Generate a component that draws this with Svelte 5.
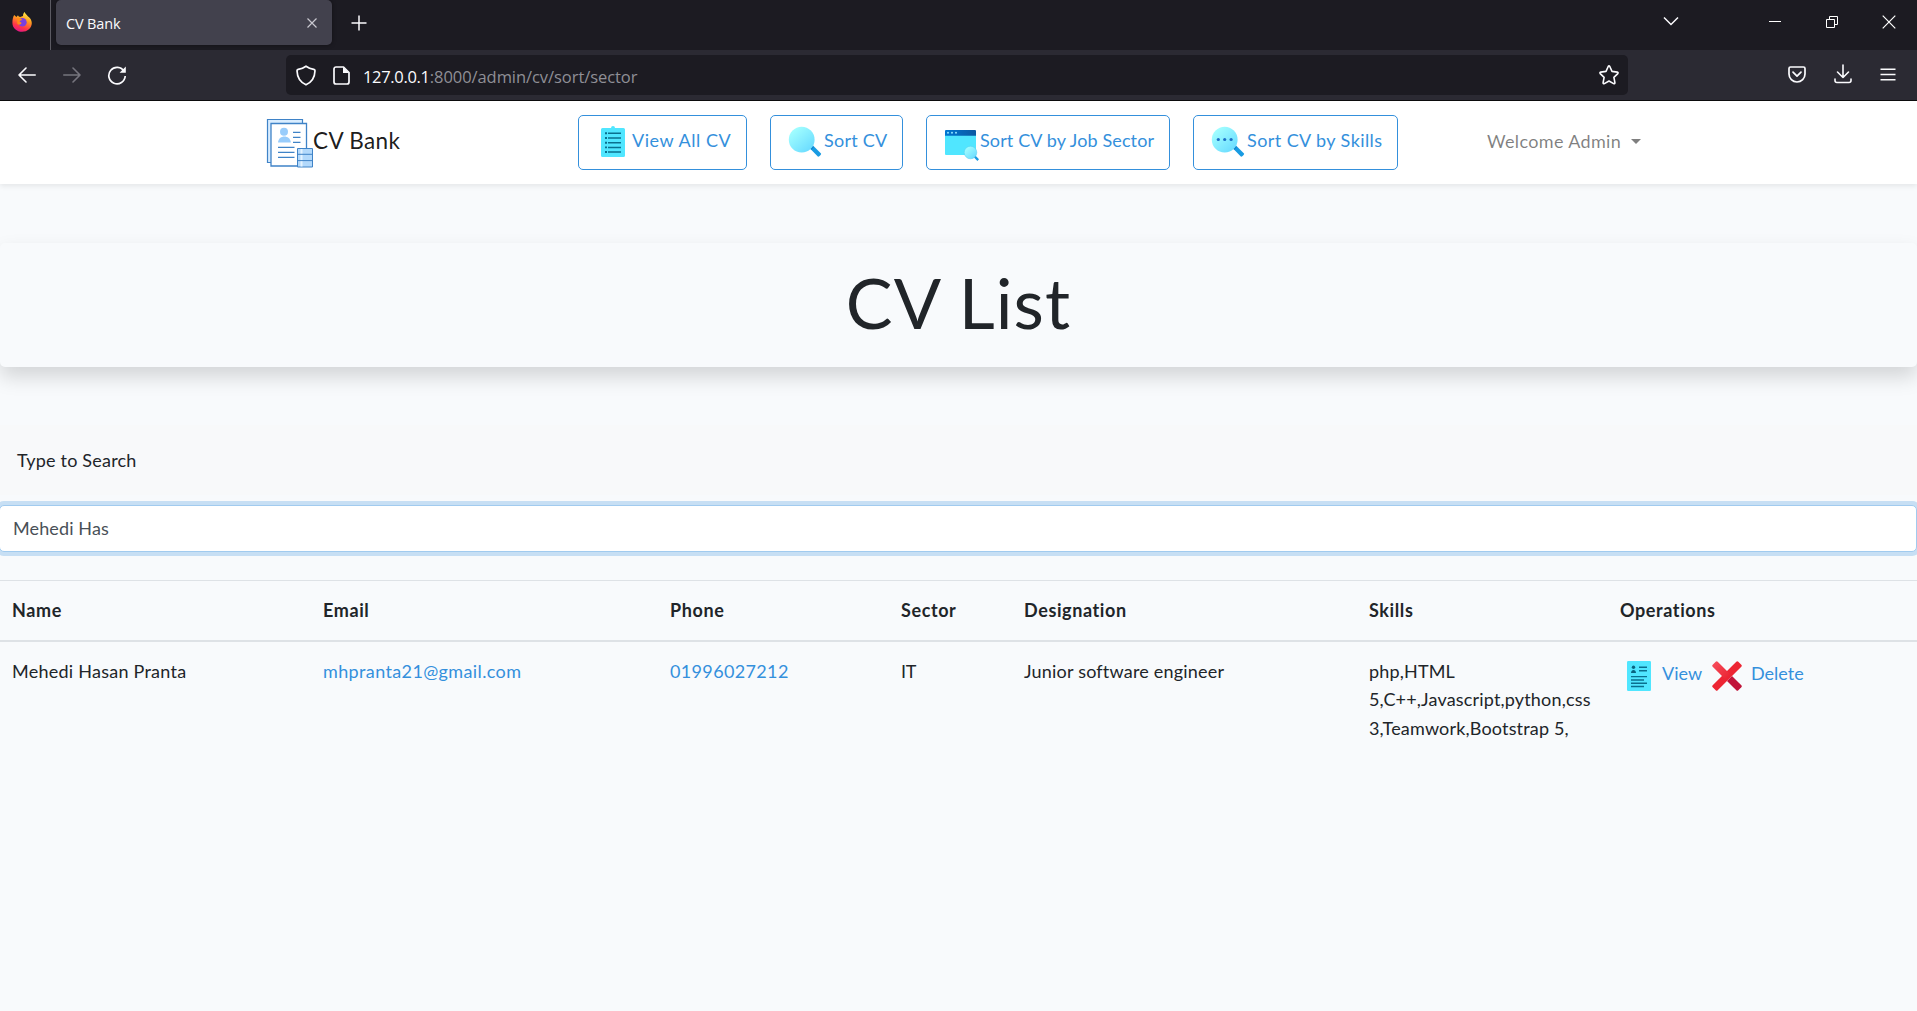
<script>
  let query = $state('Mehedi Has');
  const columns = ['Name', 'Email', 'Phone', 'Sector', 'Designation', 'Skills', 'Operations'];
</script>

{#snippet magnifier(dots)}
  <svg class="icon" viewBox="0 0 38 38">
    <path d="M24 25.500l3-3 8 8.100c.8.8-2.200 4-3.200 3z" fill="#199be2" />
    <path d="M23.200 24.800l2.600-2.600 2 2-2.600 2.600z" fill="#0d7fca" />
    <circle cx="15.700" cy="16.700" r="12.900" fill="url(#lens)" />
    {#if dots}
      <g fill="#1b6fc6"><circle cx="9.300" cy="16.500" r="1.600" /><circle cx="15.700" cy="16.500" r="1.600" /><circle cx="22.100" cy="16.500" r="1.600" /></g>
    {/if}
  </svg>
{/snippet}

<svg class="defs" width="0" height="0">
  <defs>
    <linearGradient id="lens" x1=".15" y1=".1" x2=".85" y2=".9"><stop offset="0" stop-color="#a3ffff" /><stop offset="1" stop-color="#6bdcff" /></linearGradient>
    <linearGradient id="bar"><stop offset="0" stop-color="#0077d2" /><stop offset="1" stop-color="#0b59a2" /></linearGradient>
    <linearGradient id="fox" x1=".75" y1="0" x2=".35" y2="1"><stop offset="0" stop-color="#fff44f" /><stop offset=".4" stop-color="#ff9a1f" /><stop offset=".75" stop-color="#ff3647" /><stop offset="1" stop-color="#e31587" /></linearGradient>
    <linearGradient id="cross" x1="0" y1="0" x2="1" y2="1"><stop offset="0" stop-color="#f8505f" /><stop offset="1" stop-color="#e9222f" /></linearGradient>
  </defs>
</svg>

<div class="window">
  <header class="tabs">
    <div class="firefox">
      <svg width="20" height="20" viewBox="0 0 20 20">
        <path d="M2.200 3l2.200 2L6 3.300c.4 1 1.200 1.500 2.200 1.800L11 4c0-1.800.6-3 1.600-4 .6 2 2.300 2.600 3.200 4.200C18 5.600 19.800 8 19.800 11c0 5-4.400 8.800-9.700 8.800S.4 16 .4 10.700C.4 7.600 1 5 2.200 3z" fill="url(#fox)" />
        <circle cx="10.400" cy="10.300" r="4.300" fill="#7a3fe0" />
        <path d="M5 6.500c2-.8 4.200-.2 5.200 1.500-1.200.2-2.400.7-2.600 1.800 2 .4 2.600 1.400 1 2.400-1.200.8-2.300.4-3.200-.3z" fill="#ff8a16" />
      </svg>
    </div>
    <div class="tab">
      <span class="tab-title">CV Bank</span>
      <svg width="12" height="12" viewBox="0 0 12 12" fill="none" stroke="#c9c8d0" stroke-width="1.200"><path d="M1.500 1.500l9 9M10.500 1.500l-9 9" /></svg>
    </div>
    <svg class="plus" width="16" height="16" viewBox="0 0 16 16" fill="none" stroke="#fbfbfe" stroke-width="1.500"><path d="M8 .5v15M.5 8h15" /></svg>
    <div class="controls">
      <svg width="16" height="10" viewBox="0 0 16 10" fill="none" stroke="#fbfbfe" stroke-width="1.500"><path d="M1 1.500l7 7 7-7" /></svg>
      <svg class="minimise" width="12" height="12" viewBox="0 0 12 12" stroke="#fff"><path d="M0 5.500h12" /></svg>
      <svg class="restore" width="13" height="13" viewBox="0 0 13 13" fill="none" stroke="#fff"><path d="M.5 3.500h8v8h-8zM3.500 3V.5h8v8H9" /></svg>
      <svg class="close" width="14" height="14" viewBox="0 0 14 14" stroke="#fff" stroke-width="1.200"><path d="M.7.7l12.600 12.600M13.300.7L.7 13.300" /></svg>
    </div>
  </header>

  <div class="toolbar">
    <div class="history">
      <svg width="18" height="16" viewBox="0 0 18 16" fill="none" stroke="#fbfbfe" stroke-width="1.600" stroke-linecap="round" stroke-linejoin="round"><path d="M17.200 8H1M8 1L1 8l7 7" /></svg>
      <svg width="18" height="16" viewBox="0 0 18 16" fill="none" stroke="#76757e" stroke-width="1.600" stroke-linecap="round" stroke-linejoin="round"><path d="M.8 8H17M10 1l7 7-7 7" /></svg>
      <svg class="reload" width="20" height="20" viewBox="0 0 20 20" fill="none" stroke="#fbfbfe" stroke-width="1.700"><path d="M17.100 6.500A8.200 8.200 0 1 0 18.200 11" /><path d="M18.800 1.500v6.200h-6.200z" fill="#fbfbfe" stroke="none" /></svg>
    </div>
    <div class="address">
      <svg width="20" height="21" viewBox="0 0 20 21" fill="none" stroke="#fbfbfe" stroke-width="1.700" stroke-linejoin="round"><path d="M10 1.200C7.500 3 4.500 4 2.200 4.400c-.8.2-1.200.7-1.200 1.400.2 6.200 3.500 11.600 9 14 5.500-2.400 8.800-7.800 9-14 0-.7-.4-1.200-1.200-1.400C15.500 4 12.500 3 10 1.200z" /></svg>
      <svg class="page-icon" width="17" height="19" viewBox="0 0 17 19" fill="none" stroke="#fbfbfe" stroke-width="1.700" stroke-linejoin="round"><path d="M3 1h7.500L16 6.500V16a2 2 0 0 1-2 2H3a2 2 0 0 1-2-2V3a2 2 0 0 1 2-2z" /><path d="M10 1v6h6z" fill="#fbfbfe" stroke="none" /></svg>
      <span class="url"><span class="host">127.0.0.1</span><span class="path">:8000/admin/cv/sort/sector</span></span>
      <svg class="star" width="20" height="20" viewBox="0 0 20 20" fill="none" stroke="#fbfbfe" stroke-width="1.600" stroke-linejoin="round"><path d="M9.200 1.500q.8-1.200 1.600 0l2.200 4.900 5.300.7q1.300.4.500 1.500l-3.900 3.700 1 5.400q0 1.400-1.300.9L10 16l-4.600 2.600q-1.300.5-1.300-.9l1-5.400L1.200 8.600q-.8-1.100.5-1.500l5.300-.7z" /></svg>
    </div>
    <div class="tools">
      <svg width="18" height="17" viewBox="0 0 18 17" fill="none" stroke="#fbfbfe" stroke-width="1.700" stroke-linecap="round" stroke-linejoin="round"><path d="M2.500 1h13A1.500 1.500 0 0 1 17 2.500V8A8 8 0 0 1 1 8V2.500A1.500 1.500 0 0 1 2.500 1z" /><path d="M5 6.200l4 4 4-4" /></svg>
      <svg width="18" height="20" viewBox="0 0 18 20" fill="none" stroke="#fbfbfe" stroke-width="1.600" stroke-linecap="round" stroke-linejoin="round"><path d="M9 1v12.500M3.500 8L9 13.500 14.500 8M1 15v1.500A2 2 0 0 0 3 18.500h12a2 2 0 0 0 2-2V15" /></svg>
      <svg width="16" height="13" viewBox="0 0 16 13" stroke="#fbfbfe" stroke-width="1.500"><path d="M.5 1.200h15M.5 6.500h15M.5 11.800h15" /></svg>
    </div>
  </div>

  <nav class="navbar">
    <a class="brand" href="#top">
      <svg width="48" height="50" viewBox="0 0 48 50">
        <path d="M1.500 1.500h35v43h-35z" fill="#d9edff" stroke="#3f83c7" stroke-width="1.200" />
        <path d="M5 5.500h35.500v42.500H5z" fill="#fff" stroke="#3f83c7" stroke-width="1.300" />
        <circle cx="18" cy="13.700" r="4" fill="#98ccfb" />
        <path d="M12 24.500c.5-8 12.300-8 12.800 0z" fill="#98ccfb" />
        <path d="M27 14.300h7.500M27 19.300h7.500M27 24.300h7.500M12 29.300h16.500M12 34.300h16.500M12 39.300h16.500" stroke="#3f83c7" stroke-width="1.200" />
        <path d="M31.500 30.500h15v18.500h-15z" fill="#b3d9fb" stroke="#3f83c7" />
        <path d="M35.500 31v17.500" stroke="#e4f3ff" stroke-width="2" />
        <path d="M31.500 36.300h15M31.500 42.600h15" stroke="#3f83c7" />
      </svg>
      <span>CV Bank</span>
    </a>
    <div class="links">
      <a class="button all" href="#all">
        <svg class="icon" viewBox="0 0 38 38">
          <path d="M7 6.500q0-1.500 1.500-1.500H17q0-2 2-2t2 2h8.500Q31 5 31 6.500v26q0 1.500-1.500 1.500h-21Q7 34 7 32.500z" fill="#50e6ff" />
          <path d="M14 10.300h13M14 15h13M14 19.700h13M14 24.400h13M14 29h13" stroke="#0a708f" stroke-width="1.500" />
          <path d="M11 10.300h2M11 15h2M11 19.700h2M11 24.400h2M11 29h2" stroke="#0a708f" stroke-width="1.900" />
        </svg>
        <span>View All CV</span>
      </a>
      <a class="button sort" href="#sort">{@render magnifier(false)}<span>Sort CV</span></a>
      <a class="button sector" href="#sector">
        <svg class="icon" viewBox="0 0 38 38">
          <path d="M3 12h31v19q0 1-1 1H4q-1 0-1-1z" fill="#50e6ff" />
          <path d="M3 8q0-1 1-1h29q1 0 1 1v4.700H3z" fill="url(#bar)" />
          <g fill="#8fe2ff"><circle cx="6" cy="9.800" r="1" /><circle cx="10" cy="9.800" r="1" /><circle cx="14" cy="9.800" r="1" /></g>
          <path d="M31.800 34.200l1.600-1.600 3.600 3.600-1.600 1.800z" fill="#199be2" />
          <circle cx="28.500" cy="29.500" r="6.300" fill="url(#lens)" stroke="#52cdee" stroke-width=".5" />
        </svg>
        <span>Sort CV by Job Sector</span>
      </a>
      <a class="button skills" href="#skills">{@render magnifier(true)}<span>Sort CV by Skills</span></a>
    </div>
    <button class="account">Welcome Admin<i class="caret"></i></button>
  </nav>

  <main>
    <section class="jumbotron"><h1>CV List</h1></section>
    <label class="search-label" for="search">Type to Search</label>
    <input id="search" type="text" bind:value={query} />

    <table>
      <colgroup>
        <col class="c-name" /><col class="c-email" /><col class="c-phone" /><col class="c-sector" /><col class="c-job" /><col class="c-skills" /><col />
      </colgroup>
      <thead>
        <tr>{#each columns as column}<th>{column}</th>{/each}</tr>
      </thead>
      <tbody>
        <tr>
          <td class="name">Mehedi Hasan Pranta</td>
          <td class="email"><a href="mailto:mhpranta21@gmail.com">mhpranta21@gmail.com</a></td>
          <td class="phone"><a href="tel:01996027212">01996027212</a></td>
          <td class="sector-cell">IT</td>
          <td class="job">Junior software engineer</td>
          <td class="skill-list">php,HTML<br />5,C++,Javascript,python,css<br />3,Teamwork,Bootstrap 5,</td>
          <td class="operations">
            <div class="actions">
              <a class="view" href="#view">
                <svg width="24" height="30" viewBox="0 0 24 30">
                  <rect width="24" height="30" rx="1.200" fill="#50e6ff" />
                  <circle cx="6.500" cy="6.300" r="1.700" fill="#0a6480" />
                  <path d="M4 12c0-4 5-4 5 0z" fill="#0a6480" />
                  <path d="M12 6.300h8M12 9.800h8M4 15.600h16M4 19h13M4 22.300h16M4 25.500h13" stroke="#0a708f" stroke-width="1.400" />
                </svg>
                <span>View</span>
              </a>
              <a class="delete" href="#delete">
                <svg width="30" height="30" viewBox="0 0 30 30">
                  <path d="M20 15l9.300 9.300q1 1 0 2l-3 3q-1 1-2 0L15 20z" fill="#c0143a" />
                  <path d="M24.300.7q1-1 2 0l3 3q1 1 0 2L5.700 29.300q-1 1-2 0l-3-3q-1-1 0-2z" fill="#ed2533" />
                  <path d="M3.700.7q1-1 2 0L18 13l-5 5L.7 5.700q-1-1 0-2z" fill="url(#cross)" />
                </svg>
                <span>Delete</span>
              </a>
            </div>
          </td>
        </tr>
      </tbody>
    </table>
  </main>
</div>

<style>
  :global(body) { background: #f8fafc; overflow: hidden; }
  * { box-sizing: border-box; }
  svg { display: block; flex: none; }
  .defs { position: absolute; }
  a { color: #3490dc; text-decoration: none; }
  .window { height: 1011px; font: 18px/28.4px Lato, "Liberation Sans", sans-serif; color: #212529; }

  .tabs { display: flex; height: 50px; background: #1c1b22; }
  .firefox { width: 51px; border-right: 1px solid #5b5a62; padding: 12px 0 0 12px; }
  .tab {
    width: 276px; height: 45px; margin-left: 5px; padding: 0 14px 0 10px; border-radius: 5px;
    display: flex; align-items: center; justify-content: space-between;
    background: #42414d; box-shadow: 0 0 4px rgba(0, 0, 0, .4);
  }
  .tab-title { font: 14.500px/20px "Open Sans", sans-serif; letter-spacing: -.15px; color: #fbfbfe; padding-top: 2px; }
  .plus { margin: 15px 0 0 19px; }
  .controls { display: flex; margin-left: auto; padding: 16px 21px 0 0; }
  .minimise { margin-left: 90px; }
  .restore { margin-left: 45px; }
  .close { margin-left: 43px; margin-top: -1px; }

  .toolbar { display: flex; align-items: center; height: 51px; background: #2b2a33; border-bottom: 1px solid #0c0c0d; }
  .history { display: flex; align-items: center; gap: 27px; width: 286px; padding-left: 18px; }
  .reload { margin-left: -1px; }
  .address { display: flex; align-items: center; width: 1342px; height: 40px; padding: 0 9px 0 10px; border-radius: 5px; background: #1c1b22; }
  .page-icon { margin-left: 17px; }
  .url { font: 16.500px/24px "Open Sans", sans-serif; margin: 3px 0 0 13px; white-space: nowrap; }
  .host { color: #fbfbfe; letter-spacing: -.32px; }
  .path { color: #8f8f96; letter-spacing: -.06px; }
  .star { margin-left: auto; }
  .tools { display: flex; align-items: center; gap: 28px; margin-left: auto; padding: 0 21px 2px 0; }

  .navbar {
    position: relative; display: flex; height: 83px; padding-left: 266px; background: #fff;
    box-shadow: 0 2.500px 5px rgba(0, 0, 0, .075);
  }
  .brand { display: flex; width: 312px; padding-top: 17px; font-size: 22.500px; color: rgba(0, 0, 0, .9); }
  .brand span { margin: 9px 0 0 -1px; letter-spacing: .35px; }
  .links { display: flex; gap: 23px; padding-top: 14px; }
  .button { display: flex; height: 55px; padding: 7px 0 0 15px; border: 1px solid #3490dc; border-radius: 5px; white-space: nowrap; }
  .button span { margin-top: 3px; }
  .icon { width: 38px; height: 38px; }
  .all { width: 169px; letter-spacing: .55px; }
  .sort { width: 133px; letter-spacing: .25px; }
  .sector { width: 244px; letter-spacing: .12px; }
  .skills { width: 205px; letter-spacing: .42px; }
  .account {
    display: flex; align-items: center; height: 30px; margin: 25px 0 0 89px; padding: 0; border: 0; background: none;
    font: inherit; letter-spacing: .35px; color: rgba(0, 0, 0, .5);
  }
  .caret { margin-left: 10px; margin-top: 1px; border: 5px solid transparent; border-top-color: currentColor; border-bottom: 0; }

  main { padding-top: 59px; }
  .jumbotron { height: 124px; padding-top: 17px; border-radius: 5px; background: #f8fafc; box-shadow: 0 10px 20px rgba(0, 0, 0, .15); }
  h1 { margin: 0; font-size: 70px; line-height: 84px; font-weight: 400; text-align: center; letter-spacing: 1.100px; }
  .search-label { display: block; height: 70px; margin-top: 58px; padding: 21px 0 0 17px; background: #f8f9fa; letter-spacing: .2px; }
  input {
    display: block; width: calc(100% + 1px); height: 47px; margin: 10px 0 0 -1px; padding: 0 13px 2px; outline: 0;
    border: 1px solid #a1cbef; border-radius: 5px; box-shadow: 0 0 0 4px rgba(52, 144, 220, .25);
    font: inherit; letter-spacing: .12px; color: #495057; background: #fff;
  }

  table { width: 100%; margin-top: 28px; border-collapse: separate; border-spacing: 0; table-layout: fixed; }
  .c-name { width: 311px; }
  .c-email { width: 347px; }
  .c-phone { width: 231px; }
  .c-sector { width: 123px; }
  .c-job { width: 345px; }
  .c-skills { width: 251px; }
  th, td { padding: 15px 0 15px 12px; text-align: left; vertical-align: top; }
  th { height: 62px; border-top: 1px solid #dee2e6; border-bottom: 2px solid #dee2e6; letter-spacing: .6px; }
  .name { letter-spacing: .25px; }
  .email { letter-spacing: .37px; }
  .phone { letter-spacing: .35px; }
  .sector-cell { letter-spacing: -.3px; }
  .job { letter-spacing: .2px; }
  .skill-list { letter-spacing: .17px; white-space: nowrap; }
  .actions { display: flex; padding: 4px 0 0 7px; }
  .actions a { display: flex; }
  .actions span { margin-top: -2px; }
  .view { width: 85px; gap: 11px; }
  .delete { gap: 9px; }
</style>
